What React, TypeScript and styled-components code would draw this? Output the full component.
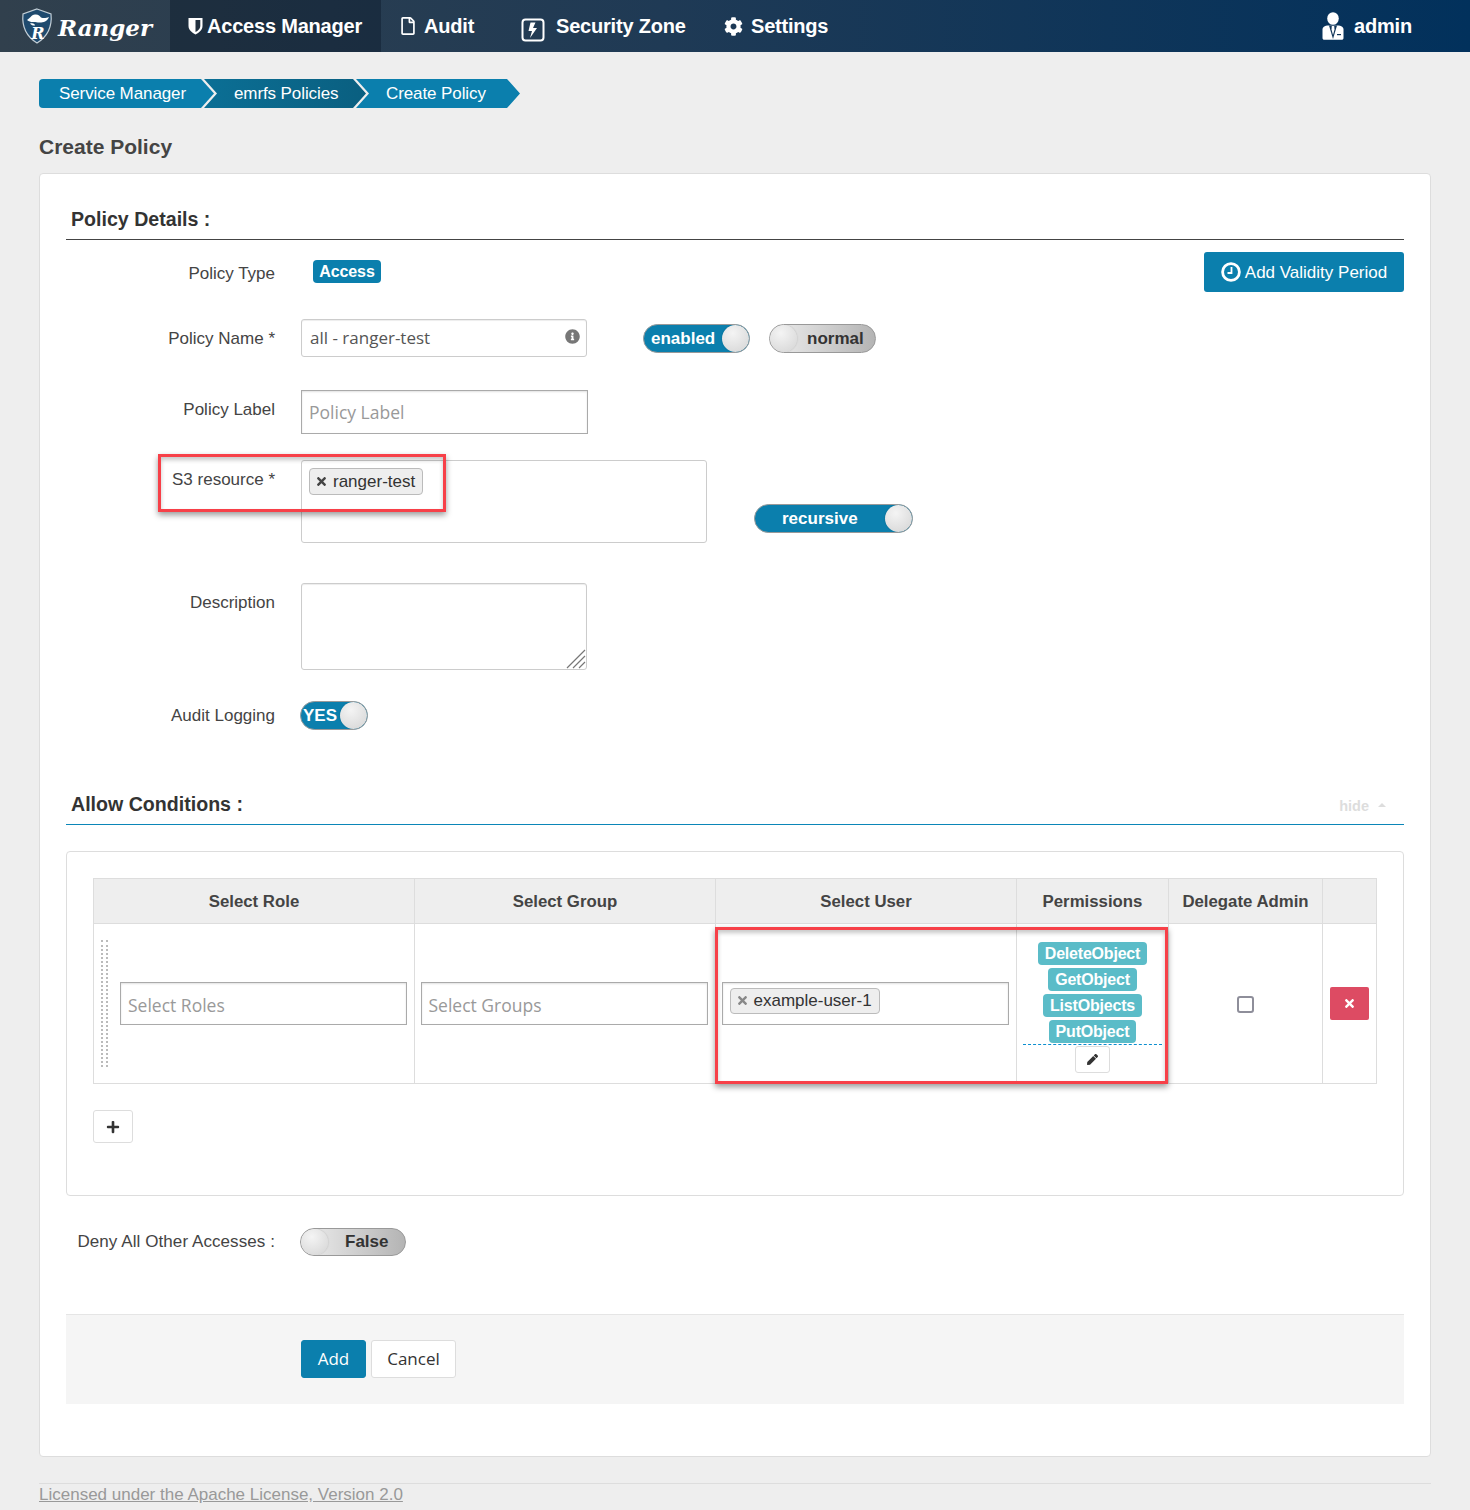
import React from "react";
import styled, { createGlobalStyle } from "styled-components";
import { FaCog, FaTimes, FaPlus, FaPen, FaInfoCircle, FaRegFile } from "react-icons/fa";

const Global = createGlobalStyle`
  html, body { margin: 0; padding: 0; background: #eeeeee; }
  body { font-family: "Liberation Sans", Arial, sans-serif; color: #444; }
  * { box-sizing: border-box; }
`;

const Page = styled.div`
  width: 1470px;
  height: 1510px;
  overflow: hidden;
  position: relative;
`;

const NavBar = styled.header`
  height: 52px;
  display: flex;
  align-items: stretch;
  background: linear-gradient(90deg, #31404d 0%, #1f3a55 45%, #02315c 100%);
  color: #fff;
`;

const Brand = styled.div`
  width: 170px;
  padding-left: 20px;
  display: flex;
  align-items: center;
  gap: 4px;
`;

const BrandName = styled.span`
  font-family: "DejaVu Serif", "Liberation Serif", serif;
  font-style: italic;
  font-weight: 700;
  font-size: 23px;
  margin-top: 2px;
`;

const NavItem = styled.a<{ $active?: boolean; $w: number; $pad: number; $gap: number }>`
  width: ${(p) => p.$w}px;
  padding-left: ${(p) => p.$pad}px;
  display: flex;
  align-items: center;
  gap: ${(p) => p.$gap}px;
  font-size: 20px;
  font-weight: 700;
  background: ${(p) => (p.$active ? "rgba(10, 25, 40, 0.42)" : "transparent")};
  svg { flex: none; }
`;

const NavSpacer = styled.div`
  flex: 1;
`;

const NavText = styled.span`
  letter-spacing: -0.2px;
`;

const ZoneGlyph = styled.svg`
  margin-top: 8px;
`;

const Main = styled.main`
  padding: 27px 39px 0;
`;

const Crumbs = styled.nav`
  display: flex;
  height: 29px;
  margin-bottom: 26px;
`;

const Crumb = styled.div<{ $w: number; $dark?: boolean; $first?: boolean; $pad: number }>`
  width: ${(p) => p.$w}px;
  margin-right: -10px;
  padding-left: ${(p) => p.$pad}px;
  display: flex;
  align-items: center;
  color: #fff;
  font-size: 17px;
  letter-spacing: -0.1px;
  background: ${(p) => (p.$dark ? "linear-gradient(90deg,#0b6f95,#0a5f80)" : "#0b7fad")};
  clip-path: ${(p) =>
    p.$first
      ? "polygon(0 0, calc(100% - 13px) 0, 100% 50%, calc(100% - 13px) 100%, 0 100%)"
      : "polygon(0 0, calc(100% - 13px) 0, 100% 50%, calc(100% - 13px) 100%, 0 100%, 13px 50%)"};
  border-radius: ${(p) => (p.$first ? "4px 0 0 4px" : "0")};
`;

const PageTitle = styled.h1`
  margin: 0 0 13px;
  font-size: 21px;
  line-height: 26px;
  font-weight: 700;
  color: #444;
`;

const Card = styled.section`
  width: 1392px;
  height: 1284px;
  background: #fff;
  border: 1px solid #dddddd;
  border-radius: 4px;
  padding: 33px 26px 0;
`;

const SectionHead = styled.div<{ $accent?: boolean; $mt?: number }>`
  height: 33px;
  margin-top: ${(p) => p.$mt ?? 0}px;
  padding-left: 5px;
  display: flex;
  justify-content: space-between;
  border-bottom: 1px solid ${(p) => (p.$accent ? "#0b86b8" : "#444")};
`;

const SectionTitle = styled.h2`
  margin: 0;
  font-size: 19.6px;
  line-height: 24px;
  font-weight: 700;
  color: #333;
`;

const HideLink = styled.span`
  font-size: 14.5px;
  font-weight: 700;
  color: #dddddd;
  padding: 6px 18px 0 0;
  display: flex;
  align-items: flex-start;
  gap: 9px;
  &::after {
    content: "";
    margin-top: 5px;
    border: 4px solid transparent;
    border-top: 0;
    border-bottom-color: #dddddd;
  }
`;

const Row = styled.div<{ $h: number; $mt: number }>`
  display: flex;
  height: ${(p) => p.$h}px;
  margin-top: ${(p) => p.$mt}px;
  align-items: flex-start;
`;

const Label = styled.label<{ $top: number; $wide?: boolean }>`
  width: 209px;
  flex: none;
  white-space: nowrap;
  text-align: right;
  font-size: 17px;
  line-height: 20px;
  padding-top: ${(p) => p.$top}px;
  color: #444;
  letter-spacing: ${(p) => (p.$wide ? "0.08px" : "0")};
`;

const Control = styled.div`
  margin-left: 26px;
  flex: 1;
  display: flex;
  align-items: flex-start;
  position: relative;
`;

const TypeBadge = styled.span`
  margin: 8px 0 0 12px;
  width: 68px;
  height: 23px;
  border-radius: 4px;
  background: #0b7fad;
  color: #fff;
  font-size: 16px;
  font-weight: 700;
  display: flex;
  align-items: center;
  justify-content: center;
  letter-spacing: -0.1px;
`;

const ValidityButton = styled.button`
  margin-left: auto;
  width: 200px;
  height: 40px;
  border: 0;
  border-radius: 3px;
  padding: 1px 0 0;
  background: #0b7fad;
  color: #fff;
  font: 400 17px "Liberation Sans", sans-serif;
  display: flex;
  align-items: center;
  justify-content: center;
  gap: 4px;
  svg { margin-top: -1px; }
`;

const NameField = styled.div`
  width: 286px;
  height: 38px;
  border: 1px solid #cccccc;
  border-radius: 3px;
  box-shadow: inset 0 1px 1px rgba(0, 0, 0, 0.075);
  padding: 0 8px 2px;
  display: flex;
  align-items: center;
  justify-content: space-between;
  font: 400 17px "Open Sans", sans-serif;
  color: #555;
  svg { margin: -2px -2px 0 0; color: #777; }
`;

const SquareField = styled.div<{ $w: number; $h: number; $tag?: boolean }>`
  width: ${(p) => p.$w}px;
  height: ${(p) => p.$h}px;
  border: 1px solid #aaaaaa;
  box-shadow: inset 0 1px 2px rgba(0, 0, 0, 0.12);
  padding: ${(p) => (p.$tag ? "5px 7px 0" : "0 7px")};
  display: flex;
  align-items: ${(p) => (p.$tag ? "flex-start" : "center")};
  font: 400 17.5px "Open Sans", sans-serif;
  color: #999;
`;

const Placeholder = styled.span<{ $mt: number }>`
  margin-top: ${(p) => p.$mt}px;
`;

const ResourceBox = styled.div`
  width: 406px;
  height: 83px;
  border: 1px solid #cccccc;
  border-radius: 3px;
  padding: 7px;
`;

const Tag = styled.span<{ $light?: boolean }>`
  display: inline-flex;
  align-items: center;
  height: ${(p) => (p.$light ? 26 : 27)}px;
  padding: 0 7px 0 5px;
  gap: 5px;
  background: #eeeeee;
  border: 1px solid #bbbbbb;
  border-radius: 4px;
  font: 400 17px "Liberation Sans", sans-serif;
  color: #333;
  svg { color: ${(p) => (p.$light ? "#888" : "#444")}; }
`;

const ToggleWrap = styled.div<{ $w: number; $h: number; $on: boolean }>`
  width: ${(p) => p.$w}px;
  height: ${(p) => p.$h}px;
  flex: none;
  border: 1px solid #999999;
  border-radius: 15px;
  position: relative;
  overflow: hidden;
  display: flex;
  align-items: center;
  font-size: 17px;
  font-weight: 700;
  color: ${(p) => (p.$on ? "#fff" : "#333")};
  background: ${(p) => (p.$on ? "#0b7fad" : "linear-gradient(90deg,#eeeeee 0%,#b4b4b4 100%)")};
`;

const ToggleText = styled.span<{ $left: number }>`
  margin-left: ${(p) => p.$left}px;
`;

const Knob = styled.span<{ $side: "left" | "right" }>`
  position: absolute;
  top: 0;
  ${(p) => p.$side}: 0;
  width: 27px;
  height: 100%;
  border-radius: 50%;
  background: radial-gradient(circle at 40% 30%, #f4f4f4, #d4d4d4);
  box-shadow: 0 0 2px rgba(0, 0, 0, 0.2);
`;

const ToggleSlot = styled.div<{ $ml: number; $mt: number }>`
  margin-left: ${(p) => p.$ml}px;
  margin-top: ${(p) => p.$mt}px;
`;

const TextArea = styled.div`
  width: 286px;
  height: 87px;
  border: 1px solid #cccccc;
  border-radius: 3px;
  box-shadow: inset 0 1px 1px rgba(0, 0, 0, 0.075);
  display: flex;
  align-items: flex-end;
  justify-content: flex-end;
`;

const Conditions = styled.div`
  width: 1338px;
  height: 345px;
  margin-top: 26px;
  border: 1px solid #dddddd;
  border-radius: 4px;
  padding: 26px;
`;

const Table = styled.div`
  display: grid;
  grid-template-columns: 321px 301px 301px 152px 154px 53px;
  width: 1284px;
  border: 1px solid #dddddd;
`;

const Th = styled.div`
  height: 45px;
  padding-top: 1px;
  background: #eeeeee;
  border-right: 1px solid #dddddd;
  border-bottom: 1px solid #dddddd;
  display: flex;
  align-items: center;
  justify-content: center;
  font-size: 16.8px;
  font-weight: 700;
  color: #444;
  &:nth-child(6) { border-right: 0; }
`;

const Td = styled.div<{ $last?: boolean }>`
  height: 159px;
  border-right: ${(p) => (p.$last ? "0" : "1px solid #dddddd")};
  display: flex;
  align-items: center;
  justify-content: center;
  position: relative;
`;

const FieldCell = styled(Td)`
  padding: 0 2px 1px 0;
`;

const RoleCell = styled(Td)`
  justify-content: flex-start;
  padding: 0 7px 1px 7px;
  gap: 12px;
`;

const DragHandle = styled.div`
  width: 7px;
  height: 127px;
  margin-top: 1px;
  flex: none;
  border: 2px dotted #bbbbbb;
  border-width: 0 2px;
`;

const PermCell = styled(Td)`
  flex-direction: column;
  justify-content: flex-start;
  padding: 18px 6px 0;
  gap: 3px;
`;

const PermTag = styled.span`
  height: 23px;
  padding: 0 7px;
  background: #5bbcc8;
  color: #fff;
  border-radius: 4px;
  font-size: 16px;
  font-weight: 700;
  letter-spacing: -0.2px;
  display: flex;
  align-items: center;
`;

const PermEdit = styled.div`
  align-self: stretch;
  margin-top: -2px;
  border-top: 1px dashed #0b8fd0;
  display: flex;
  justify-content: center;
  padding-top: 1px;
`;

const MiniButton = styled.button<{ $w: number; $h: number }>`
  width: ${(p) => p.$w}px;
  height: ${(p) => p.$h}px;
  padding: 0;
  background: #fff;
  border: 1px solid #dddddd;
  border-radius: 3px;
  color: #333;
  display: flex;
  align-items: center;
  justify-content: center;
`;

const CheckBox = styled.span`
  width: 17px;
  height: 17px;
  margin-top: 2px;
  border: 2px solid #8e8e9a;
  border-radius: 3px;
`;

const DangerButton = styled.button`
  width: 39px;
  height: 33px;
  margin-top: -1px;
  border: 0;
  padding: 0;
  border-radius: 2px;
  background: #dd4b63;
  color: #fff;
  display: flex;
  align-items: center;
  justify-content: center;
`;

const AddRow = styled.div`
  margin-top: 26px;
`;

const FormFooter = styled.div`
  width: 1338px;
  height: 90px;
  margin-top: 57px;
  background: #f5f5f5;
  border-top: 1px solid #e5e5e5;
  padding: 25px 0 0 235px;
  display: flex;
  align-items: flex-start;
  gap: 5px;
`;

const ActionButton = styled.button<{ $primary?: boolean; $w: number }>`
  width: ${(p) => p.$w}px;
  height: 38px;
  border-radius: 3px;
  border: 1px solid ${(p) => (p.$primary ? "#0b7fad" : "#dddddd")};
  background: ${(p) => (p.$primary ? "#0b7fad" : "#fff")};
  color: ${(p) => (p.$primary ? "#fff" : "#333")};
  font: 400 17px "Open Sans", sans-serif;
  padding: 0 0 2px;
`;

const SiteFooter = styled.footer`
  margin-top: 26px;
  width: 1392px;
  border-top: 1px solid #dddddd;
  padding-top: 1px;
  font-size: 17px;
  line-height: 20px;
  color: #999;
  text-decoration: underline;
`;

const Highlight = styled.div<{ $x: number; $y: number; $w: number; $h: number }>`
  position: absolute;
  left: ${(p) => p.$x}px;
  top: ${(p) => p.$y}px;
  width: ${(p) => p.$w}px;
  height: ${(p) => p.$h}px;
  border: 3px solid #f74048;
  box-shadow: 0 3px 6px rgba(0, 0, 0, 0.4), inset 0 3px 4px rgba(0, 0, 0, 0.22);
  pointer-events: none;
`;

const ShieldIcon = () => (
  <svg width="15" height="18" viewBox="0 0 15 18">
    <path d="M0.5 1h14v8c0 4-3.500 6.700-7 8.500C4 15.700 0.500 13 0.500 9z" fill="#fff" />
    <path d="M7.500 3H12.300v6c0 2.700-2.300 4.700-4.800 6z" fill="#22303f" />
  </svg>
);

const ZoneIcon = () => (
  <ZoneGlyph width="24" height="24" viewBox="0 0 24 24" fill="none">
    <rect x="1.500" y="1.500" width="21" height="21" rx="3" stroke="#fff" strokeWidth="2" />
    <path d="M14.500 4.500h-5L7.500 13H11L9 20l7-10h-4z" fill="#fff" />
  </ZoneGlyph>
);

const AdminIcon = () => (
  <svg width="22" height="28" viewBox="0 0 22 28">
    <ellipse cx="11" cy="6.500" rx="5.800" ry="6.300" fill="#fff" />
    <path d="M0.500 17.500c0-2.800 3-3.800 5.500-4h10c2.500.2 5.500 1.200 5.500 4V26c0 1-.8 1.800-1.800 1.800H2.300c-1 0-1.800-.8-1.800-1.800z" fill="#fff" />
    <path d="M7 13.500h8L11 27z" fill="#12365a" />
    <path d="M9.800 14h2.400l.3 3.500-1.500 5.500-1.500-5.500z" fill="#fff" />
    <rect x="15" y="22" width="4" height="1.200" fill="#12365a" />
  </svg>
);

const LogoIcon = () => (
  <svg width="34" height="36" viewBox="0 0 34 36">
    <path d="M17 1 L31 6 C32 16 30 27 17 35 C4 27 2 16 3 6 Z" fill="#1f4a6e" stroke="#c3ced6" strokeWidth="1.200" />
    <path d="M7 12 C10 10.500 11 7 15 6.500 C18 6 20 8 21 9.500 C24 10.500 26 10 29 9 C27 14 22 15 18 14.500 C14 14 11 15 7 12Z" fill="#fff" />
    <path d="M10 15.500 C13 14.500 15 16 15 17.500 C13 17.800 11 17 10 15.500Z" fill="#fff" />
    <text x="18" y="31" textAnchor="middle" fontFamily="DejaVu Serif, serif" fontWeight="700" fontStyle="italic" fontSize="16" fill="#fff">R</text>
  </svg>
);

const ClockIcon = () => (
  <svg width="20" height="20" viewBox="0 0 20 20" fill="none" stroke="#fff">
    <circle cx="10" cy="10" r="8.400" strokeWidth="2.800" />
    <path d="M10.500 5v6H6.500" strokeWidth="1.800" />
  </svg>
);

const Resizer = () => (
  <svg width="20" height="20" viewBox="0 0 20 20" stroke="#777" strokeWidth="1.200">
    <path d="M1 19 19 1M7 19 19 7M13 19 19 13" />
  </svg>
);

const Toggle = ({ w, h = 29, on, text, left, side }: { w: number; h?: number; on: boolean; text: string; left: number; side: "left" | "right" }) => (
  <ToggleWrap $w={w} $h={h} $on={on}>
    <ToggleText $left={left}>{text}</ToggleText>
    <Knob $side={side} />
  </ToggleWrap>
);

export default function App() {
  return (
    <Page>
      <Global />
      <NavBar>
        <Brand>
          <LogoIcon />
          <BrandName>Ranger</BrandName>
        </Brand>
        <NavItem $active $w={211} $pad={18} $gap={4}>
          <ShieldIcon />
          <NavText>Access Manager</NavText>
        </NavItem>
        <NavItem $w={120} $pad={18} $gap={7}>
          <FaRegFile size={18} />
          <NavText>Audit</NavText>
        </NavItem>
        <NavItem $w={223} $pad={20} $gap={11}>
          <ZoneIcon />
          <NavText>Security Zone</NavText>
        </NavItem>
        <NavItem $w={180} $pad={0} $gap={8}>
          <FaCog size={19} />
          <NavText>Settings</NavText>
        </NavItem>
        <NavSpacer />
        <NavItem $w={148} $pad={0} $gap={10}>
          <AdminIcon />
          <NavText>admin</NavText>
        </NavItem>
      </NavBar>
      <Main>
        <Crumbs>
          <Crumb $first $w={175} $pad={20}>Service Manager</Crumb>
          <Crumb $dark $w={162} $pad={30}>emrfs Policies</Crumb>
          <Crumb $w={164} $pad={30}>Create Policy</Crumb>
        </Crumbs>
        <PageTitle>Create Policy</PageTitle>
        <Card>
          <SectionHead>
            <SectionTitle>Policy Details :</SectionTitle>
          </SectionHead>
          <Row $h={40} $mt={12}>
            <Label $top={12}>Policy Type</Label>
            <Control>
              <TypeBadge>Access</TypeBadge>
              <ValidityButton>
                <ClockIcon />
                Add Validity Period
              </ValidityButton>
            </Control>
          </Row>
          <Row $h={38} $mt={27}>
            <Label $top={10}>Policy Name *</Label>
            <Control>
              <NameField>
                all - ranger-test
                <FaInfoCircle size={15} />
              </NameField>
              <ToggleSlot $ml={56} $mt={5}>
                <Toggle w={107} on text="enabled" left={7} side="right" />
              </ToggleSlot>
              <ToggleSlot $ml={19} $mt={5}>
                <Toggle w={107} on={false} text="normal" left={37} side="left" />
              </ToggleSlot>
            </Control>
          </Row>
          <Row $h={44} $mt={33}>
            <Label $top={10}>Policy Label</Label>
            <Control>
              <SquareField $w={287} $h={44}>
                <Placeholder $mt={-1}>Policy Label</Placeholder>
              </SquareField>
            </Control>
          </Row>
          <Row $h={83} $mt={26}>
            <Label $top={10}>S3 resource *</Label>
            <Control>
              <ResourceBox>
                <Tag>
                  <FaTimes size={13} />
                  ranger-test
                </Tag>
              </ResourceBox>
              <ToggleSlot $ml={47} $mt={44}>
                <Toggle w={159} on text="recursive" left={27} side="right" />
              </ToggleSlot>
            </Control>
          </Row>
          <Row $h={87} $mt={40}>
            <Label $top={10}>Description</Label>
            <Control>
              <TextArea>
                <Resizer />
              </TextArea>
            </Control>
          </Row>
          <Row $h={29} $mt={31}>
            <Label $top={5}>Audit Logging</Label>
            <Control>
              <ToggleSlot $ml={-1} $mt={0}>
                <Toggle w={68} on text="YES" left={2} side="right" />
              </ToggleSlot>
            </Control>
          </Row>
          <SectionHead $accent $mt={62}>
            <SectionTitle>Allow Conditions :</SectionTitle>
            <HideLink>hide</HideLink>
          </SectionHead>
          <Conditions>
            <Table>
              <Th>Select Role</Th>
              <Th>Select Group</Th>
              <Th>Select User</Th>
              <Th>Permissions</Th>
              <Th>Delegate Admin</Th>
              <Th />
              <RoleCell>
                <DragHandle />
                <SquareField $w={287} $h={43}>
                  <Placeholder $mt={3}>Select Roles</Placeholder>
                </SquareField>
              </RoleCell>
              <FieldCell>
                <SquareField $w={287} $h={43}>
                  <Placeholder $mt={3}>Select Groups</Placeholder>
                </SquareField>
              </FieldCell>
              <FieldCell>
                <SquareField $w={287} $h={43} $tag>
                  <Tag $light>
                    <FaTimes size={13} />
                    example-user-1
                  </Tag>
                </SquareField>
              </FieldCell>
              <PermCell>
                <PermTag>DeleteObject</PermTag>
                <PermTag>GetObject</PermTag>
                <PermTag>ListObjects</PermTag>
                <PermTag>PutObject</PermTag>
                <PermEdit>
                  <MiniButton $w={35} $h={27}>
                    <FaPen size={11} />
                  </MiniButton>
                </PermEdit>
              </PermCell>
              <Td>
                <CheckBox />
              </Td>
              <Td $last>
                <DangerButton>
                  <FaTimes size={13} />
                </DangerButton>
              </Td>
            </Table>
            <AddRow>
              <MiniButton $w={40} $h={33}>
                <FaPlus size={14} />
              </MiniButton>
            </AddRow>
          </Conditions>
          <Row $h={29} $mt={32}>
            <Label $top={4} $wide>Deny All Other Accesses :</Label>
            <Control>
              <ToggleSlot $ml={-1} $mt={0}>
                <Toggle w={106} h={28} on={false} text="False" left={44} side="left" />
              </ToggleSlot>
            </Control>
          </Row>
          <FormFooter>
            <ActionButton $primary $w={65}>Add</ActionButton>
            <ActionButton $w={85}>Cancel</ActionButton>
          </FormFooter>
        </Card>
        <SiteFooter>Licensed under the Apache License, Version 2.0</SiteFooter>
      </Main>
      <Highlight $x={158} $y={454} $w={288} $h={58} />
      <Highlight $x={715} $y={927} $w={453} $h={157} />
    </Page>
  );
}
